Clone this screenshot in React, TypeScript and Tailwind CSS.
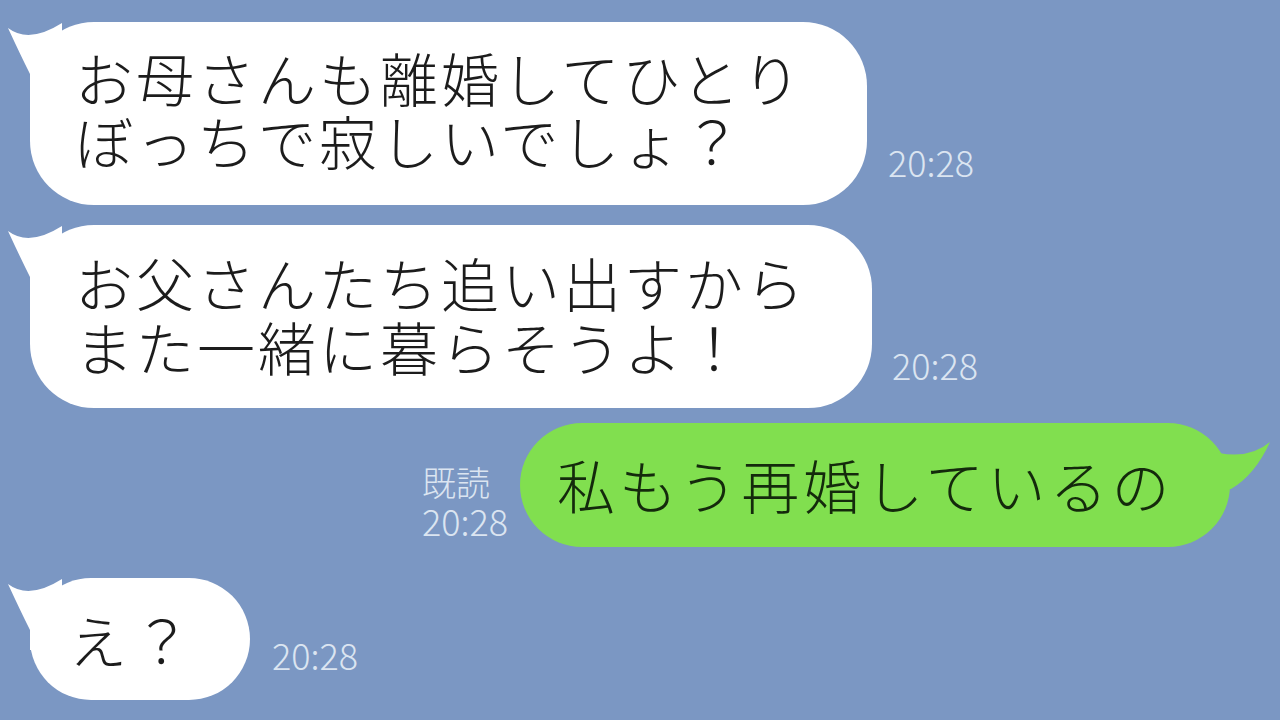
const jp = { fontFamily: '"Noto Sans CJK JP", "Noto Sans", sans-serif' }

function LeftTail() {
  return (
    <svg className="absolute left-[-25px] top-0" width="60" height="72" viewBox="0 0 60 72">
      <path d="M3,6 Q24,22 57,1 L57,72 L25,72 L25,52 Q15,32 3,6 Z" fill="#ffffff" />
    </svg>
  )
}

function RightTail() {
  return (
    <svg className="absolute right-[-45px] top-0" width="60" height="72" viewBox="0 0 60 72">
      <path d="M55,19 Q35,36 4,30 L4,66 L16,66 Q40,52 55,19 Z" fill="#81df4f" />
    </svg>
  )
}

function Time({ text, className }: { text: string; className: string }) {
  return (
    <div className={"text-[36px] leading-none font-light text-[#dbe5f1] " + className} style={jp}>
      {text}
    </div>
  )
}

export default function App() {
  return (
    <div className="w-[1280px] h-[720px] overflow-hidden bg-[#7b97c3] flex flex-col pt-[22px]" style={jp}>
      <div className="flex items-end pl-[30px]">
        <div className="relative w-[837px] h-[183px] rounded-[64px] bg-white pl-[45px] pb-[9px] flex flex-col justify-center">
          <LeftTail />
          <div className="relative text-[58px] leading-[63px] tracking-[3px] font-light text-[#1c1c1c]">
            <div>お母さんも離婚してひとり</div>
            <div>ぼっちで寂しいでしょ？</div>
          </div>
        </div>
        <Time text="20:28" className="ml-[21px] mb-[26px]" />
      </div>

      <div className="flex items-end pl-[30px] mt-[20px]">
        <div className="relative w-[842px] h-[183px] rounded-[64px] bg-white pl-[45px] pb-[6px] flex flex-col justify-center">
          <LeftTail />
          <div className="relative text-[58px] leading-[64px] tracking-[3px] font-light text-[#1c1c1c]">
            <div>お父さんたち追い出すから</div>
            <div>また一緒に暮らそうよ！</div>
          </div>
        </div>
        <Time text="20:28" className="ml-[20px] mb-[26px]" />
      </div>

      <div className="flex items-end justify-end pr-[50px] mt-[15px]">
        <div className="flex flex-col mr-[12px] mb-[9px] text-[34px] leading-[40px] font-light text-[#dbe5f1]">
          <div>既読</div>
          <div className="text-[36px] leading-[36px]">20:28</div>
        </div>
        <div className="relative w-[710px] h-[124px] rounded-full bg-[#81df4f] pl-[37px] pb-[2px] flex items-center">
          <RightTail />
          <div className="relative text-[58px] leading-[64px] tracking-[4px] font-light text-[#142a0c]">
            私もう再婚しているの
          </div>
        </div>
      </div>

      <div className="flex items-end pl-[30px] mt-[31px]">
        <div className="relative w-[220px] h-[122px] rounded-full bg-white pl-[39px] flex items-center">
          <LeftTail />
          <div className="relative text-[58px] leading-[64px] tracking-[6px] font-light text-[#1c1c1c]">
            え？
          </div>
        </div>
        <Time text="20:28" className="ml-[22px] mb-[28px]" />
      </div>
    </div>
  )
}
